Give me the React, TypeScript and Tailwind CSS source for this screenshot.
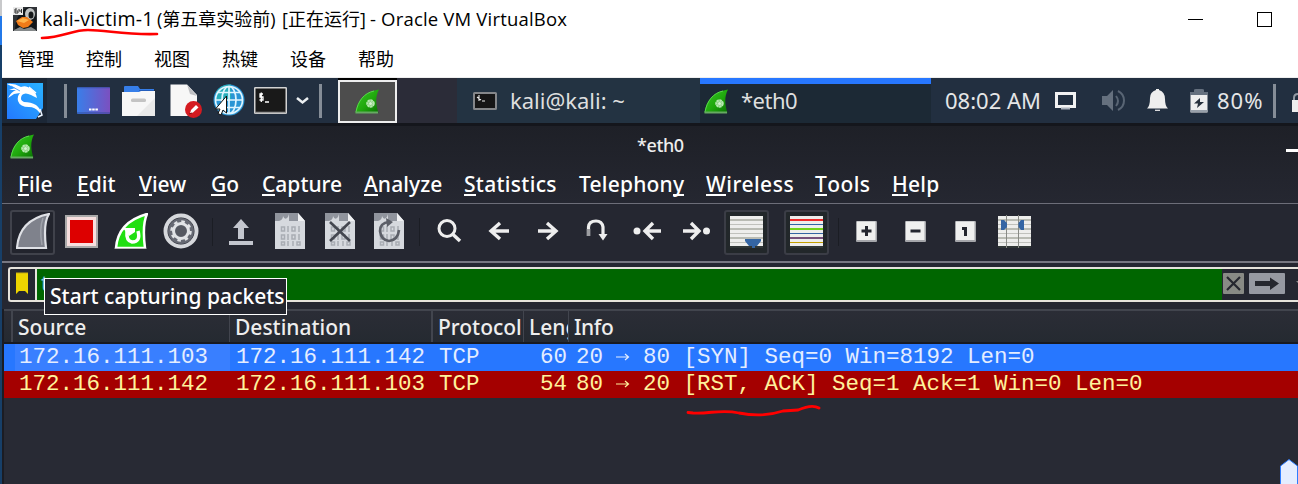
import React from "react";

type IconProps = { box: string; className?: string; children: React.ReactNode };

function Icon({ box, className = "", children }: IconProps) {
  const [, , w, h] = box.split(" ");
  return (
    <svg viewBox={box} width={w} height={h} className={"block shrink-0 " + className}>
      {children}
    </svg>
  );
}

function GreenFin({ className = "" }: { className?: string }) {
  return (
    <Icon box="0 0 25 25" className={className}>
      <defs>
        <linearGradient id="fin" x1="0" y1="0" x2="1" y2="1">
          <stop offset="0" stopColor="#3ac72b" />
          <stop offset=".55" stopColor="#1fa80c" />
          <stop offset="1" stopColor="#087003" />
        </linearGradient>
      </defs>
      <path d="M.5 24C2 12 9 3 24 .5C20 8 21 16 23.500 24Z" fill="url(#fin)" />
      <path d="M1 23C3 12 9 4 19 2" fill="none" stroke="#59d84c" strokeWidth="1" />
      <path d="M.5 22.500H23V24.500H.5Z" fill="#66aa62" />
      <circle cx="15.500" cy="14.500" r="3.200" fill="#7fca77" stroke="#b5e8ae" strokeWidth="2.200" strokeDasharray="2.400 .5" />
      <circle cx="15.500" cy="14.500" r="1.500" fill="#d5f2d0" />
    </Icon>
  );
}

function VmTitle() {
  return (
    <div className="flex h-10 items-start">
      <Icon box="13 7 24 24" className="ml-[11px] mt-[7px]">
        <rect x="13" y="7" width="24" height="24" fill="#303337" />
        <path d="M15 30C15 20 20 9 29 7C36 9 37 18 36 30Z" fill="#11161a" />
        <ellipse cx="30" cy="14" rx="5" ry="6" fill="#bfc2c2" />
        <ellipse cx="31" cy="15" rx="2.500" ry="3.500" fill="#16191b" />
        <path d="M16 21L22 17L27 17L33 22L28 27L23 28L18 25Z" fill="#f07b19" />
        <path d="M17 21L23 18L29 20L24 23Z" fill="#ffb44b" />
        <path d="M14 30L20 27L24 29L31 27L36 30V31H14Z" fill="#85898a" />
        <rect x="13" y="7" width="10" height="8" fill="#e9e9e9" />
        <path d="M17 9H15V13H18V11H15M19 9V11H22M21.500 9V13" fill="none" stroke="#333" strokeWidth="1" />
      </Icon>
      <div className="ml-[5px] mt-[7px] flex h-6 items-center whitespace-pre font-['Open_Sans','Noto_Sans_CJK_SC',sans-serif] text-[18px] leading-6 text-black">
        <span className="w-[115px] text-[19.500px] tracking-[0.230px]">kali-victim-1</span>
        <span className="w-[125px]">(第五章实验前)</span>
        <span className="w-[88px]">[正在运行]</span>
        <span className="text-[18.500px] tracking-[0.180px]">- Oracle VM VirtualBox</span>
      </div>
      <div className="ml-auto mt-[12px] flex h-[15px]">
        <div className="mr-[54px] mt-[7px] h-px w-[15px] bg-black" />
        <div className="mr-[26px] h-[15px] w-[15px] border border-black" />
      </div>
    </div>
  );
}

function VmMenu() {
  return (
    <div className="flex h-[38px] gap-8 border-b border-[#eeeeee] pl-4 pt-[6px] font-['Noto_Sans_CJK_SC',sans-serif] text-[18px] leading-[25px] text-black">
      {["管理", "控制", "视图", "热键", "设备", "帮助"].map((t) => (
        <span key={t} className="w-9 whitespace-nowrap">{t}</span>
      ))}
    </div>
  );
}

function Divider({ className }: { className: string }) {
  return <div className={"mt-[6px] h-[34px] w-[3px] shrink-0 bg-[#858d97] " + className} />;
}

function Panel() {
  return (
    <div className="flex h-[45px] items-start bg-[#222f40]">
      <div className="h-[45px] w-[45px] shrink-0 bg-[#1c2736] pl-[5px] pt-[5px]">
        <Icon box="7 83 36 36">
          <defs>
            <linearGradient id="dragon" x1="0" y1="1" x2="1" y2="0">
              <stop stopColor="#2379ff" />
              <stop offset="1" stopColor="#29b2ff" />
            </linearGradient>
          </defs>
          <rect x="7" y="83" width="36" height="36" fill="url(#dragon)" />
          <path d="M7 84Q14 83 21 87Q27 85 31 89Q36 92 37 98L31 95Q25 92 22 95Q19 100 24 102Q31 102 36 105Q41 109 42 115L39 112Q35 107 29 107Q20 107 18 101Q17 96 20 93L14 94L8 98Q11 92 16 90L9 90L15 88Z" fill="#fff" />
          <path d="M11 86L20 91M27 86L34 90" stroke="#2b92ff" strokeWidth=".8" />
          <path d="M29 87L36 93" stroke="#fff" strokeWidth="1.300" />
          <path d="M36 119L43 108V119Z" fill="#1c2736" />
          <path d="M40 109L42 115L38 117" stroke="#e9f3ff" fill="none" strokeWidth="1.500" />
        </Icon>
      </div>
      <Divider className="ml-[17px]" />
      <Icon box="77 87 33 27" className="ml-[10px] mt-[9px]">
        <defs>
          <linearGradient id="desk">
            <stop stopColor="#397ee9" />
            <stop offset="1" stopColor="#7b50c0" />
          </linearGradient>
        </defs>
        <rect x="77" y="87" width="33" height="27" rx="1" fill="url(#desk)" />
        <path d="M77 87.500H110M77 113H110" stroke="#304a98" opacity=".6" strokeWidth="1.500" />
        <path d="M89 109.500H98" stroke="#fff" strokeWidth="2.200" strokeDasharray="2.500 .7" />
      </Icon>
      <Icon box="122 86 33 30" className="ml-3 mt-2">
        <path d="M124 92V87Q124 86 125 86H138L140 89H154V95H124Z" fill="#367ee9" />
        <path d="M139 90.500H154" stroke="#245ebc" />
        <path d="M122 92H139L141 91H155V116H122Z" fill="#f7f7f7" />
        <path d="M155 98V116H137Z" fill="#e9e9e9" />
        <rect x="131" y="98.500" width="15" height="3.500" rx="1.500" fill="#c4c4c4" />
      </Icon>
      <Icon box="170 84 32 34" className="ml-[15px] mt-[6px]">
        <path d="M170.500 84.500H187L197 95V116H170.500Z" fill="#f7f7f7" />
        <path d="M187 84.500L197 96L190 94Z" fill="#bfc0c3" />
        <circle cx="193.500" cy="109.500" r="8.500" fill="#d51b21" />
        <path d="M190 113.500L191 110L196 105L198.500 107.500L193 112.500Z" fill="#fff" />
        <path d="M189 114L192 113" stroke="#8b1015" />
      </Icon>
      <Icon box="213 84 32 33" className="ml-[11px] mt-[6px]">
        <circle cx="229" cy="100" r="15.500" fill="#2995d5" />
        <path d="M216 92A15.500 15.500 0 0 1 231 84.500V100H216Z" fill="#28aebb" />
        <g fill="none" stroke="#dff5ff" strokeWidth="1.700">
          <circle cx="229" cy="100" r="13.500" />
          <ellipse cx="229" cy="100" rx="7" ry="13.500" />
          <path d="M229 86V114M215 100H243M218 92.500H240M218 107.500H240" />
        </g>
        <path d="M226.500 96V113L223 110L221 115L218 113.500L220 109H215.500Z" fill="#fff" stroke="#111" strokeWidth="1" />
      </Icon>
      <Icon box="254 87 33 27" className="ml-[9px] mt-[9px]">
        <rect x="254.750" y="87.750" width="31.500" height="25.500" rx=".5" fill="#191919" stroke="#d3d3d3" strokeWidth="1.500" />
        <path d="M255 112.500H286" stroke="#999" strokeWidth="1.500" />
        <path d="M263 94H260V97H263V100H259.500M261.300 92.500V102M265 102H269" fill="none" stroke="#fff" strokeWidth="1.300" />
      </Icon>
      <Icon box="296 96 13 9" className="ml-[9px] mt-[18px]">
        <path d="M297 98L302.500 102.500L308 98" fill="none" stroke="#edf0f2" strokeWidth="2.500" />
      </Icon>
      <Divider className="ml-[10px]" />
      <div className="ml-4 h-[45px] w-[59px] shrink-0 border-t-2 border-black bg-[#2b2c38]">
        <div className="h-[43px] border-2 border-[#eeeeee] bg-[#4d4d4d] pl-[15px] pt-[7px]"><GreenFin /></div>
      </div>
      <div className="h-[45px] w-[60px] shrink-0 bg-[#2b2c38]" />
      <div className="flex h-[45px] w-[243px] shrink-0 items-start bg-[#233342]">
        <Icon box="473 92 24 18" className="ml-4 mt-[14px]">
          <rect x="474" y="93" width="22" height="16" rx=".5" fill="#161616" stroke="#85878a" strokeWidth="2" />
          <path d="M479 95V101M477 97L481 100M482 101H485" stroke="#eee" strokeWidth="1.100" />
        </Icon>
        <span className="ml-[13px] mt-[8px] whitespace-pre font-['Noto_Sans'] text-[22px] leading-7 text-[#dedfdf]">kali@kali: ~</span>
      </div>
      <div className="flex h-[45px] w-[231px] shrink-0 border-t-[6px] border-[#2777ff] bg-[#1c2935]">
        <GreenFin className="ml-1 mt-[5px]" />
        <span className="ml-[12px] mt-[2px] font-['Noto_Sans'] text-[22px] leading-7 tracking-[-0.500px] text-[#dedfdf]">*eth0</span>
      </div>
      <span className="ml-[14px] mt-[8px] w-[110px] shrink-0 whitespace-nowrap font-['Noto_Sans'] text-[22px] leading-7 text-[#e5e6e7]">08:02 AM</span>
      <Icon box="1055 91 21 19" className="mt-[13px]">
        <path d="M1056.500 93.500H1074.500V106.500H1056.500Z" fill="none" stroke="#f2f2f2" strokeWidth="3" />
        <path d="M1061 108.500H1070" stroke="#aab1ba" strokeWidth="2" />
      </Icon>
      <Icon box="1101 89 24 23" className="ml-[25px] mt-[11px]">
        <path d="M1102 96H1107L1113 90V111L1107 105H1102Z" fill="#65707e" />
        <path d="M1116 96Q1120 101 1116 106M1118 91C1126 95 1126 106 1118 110" fill="none" stroke="#596574" strokeWidth="2" />
      </Icon>
      <Icon box="1147 89 21 23" className="ml-[22px] mt-[11px]">
        <path d="M1147 108.500Q1150 106 1150 98Q1150 92 1156 90V89H1159V90Q1165 92 1165 99Q1165 106 1168 108.500Z" fill="#eee" />
        <path d="M1155 110.300H1160" stroke="#eee" strokeWidth="1.200" />
      </Icon>
      <Icon box="1190 89 18 24" className="ml-[22px] mt-[11px]">
        <path d="M1190 95V92H1194V90Q1194 89 1196 89H1202Q1204 89 1204 90V92H1208V95Z" fill="#65707e" />
        <path d="M1190.500 95H1207.500V112.500H1190.500Z" fill="#eee" />
        <path d="M1190.500 111H1207.500" stroke="#98a0aa" strokeWidth="2" />
        <path d="M1200 98L1194 103.500H1198L1197 108L1204 102H1200Z" fill="#27303c" />
      </Icon>
      <span className="ml-[9px] mt-[8px] w-[56px] shrink-0 font-['Noto_Sans'] text-[22px] leading-7 tracking-[1px] text-[#e5e6e7]">80%</span>
      <Divider className="" />
      <Icon box="1291 91 7 21" className="ml-[15px] mt-[13px]">
        <path d="M1294 101V98Q1294 94 1298 94" fill="none" stroke="#9299a3" strokeWidth="2" />
        <path d="M1292 100H1298V112H1292Z" fill="#eee" />
      </Icon>
    </div>
  );
}

const menuItems: [string, string, string, string][] = [
  ["", "F", "ile", "w-[59px]"],
  ["", "E", "dit", "w-[62px]"],
  ["", "V", "iew", "w-[72px]"],
  ["", "G", "o", "w-[51px]"],
  ["", "C", "apture", "w-[102px]"],
  ["", "A", "nalyze", "w-[100px] tracking-[0.100px]"],
  ["", "S", "tatistics", "w-[115px] tracking-[0.300px]"],
  ["Telephon", "y", "", "w-[127px] tracking-[0.200px]"],
  ["", "W", "ireless", "w-[109px] tracking-[0.500px]"],
  ["", "T", "ools", "w-[77px] tracking-[0.400px]"],
  ["", "H", "elp", "w-[60px] tracking-[0.300px]"],
];

function AppHeader() {
  return (
    <div className="flex h-[81px] flex-col border-t-[3px] border-[#14161c] border-b border-b-[#6d6e79] bg-linear-to-b from-[#1e2027] to-[#252731]">
      <div className="flex h-[40px] items-start">
        <GreenFin className="ml-2 mt-2" />
        <span className="ml-[602px] mt-[7px] font-['Noto_Sans'] text-[18px] font-medium leading-6 tracking-[-0.400px] text-[#eeeeee]">*eth0</span>
        <div className="ml-auto mt-[23px] h-[3px] w-3 bg-white" />
      </div>
      <div className="flex pl-4 font-['Noto_Sans'] text-[21px] font-medium leading-[36px] text-white">
        {menuItems.map(([a, u, b, w]) => (
          <div key={a + u + b} className={"flex h-[36px] shrink-0 whitespace-nowrap " + w}>
            <span>{a}</span>
            <span className="h-[30px] border-b-2 border-white leading-[36px]">{u}</span>
            <span>{b}</span>
          </div>
        ))}
      </div>
    </div>
  );
}

function BitsDoc({ children, className }: { children?: React.ReactNode; className: string }) {
  return (
    <Icon box="0 0 30 36" className={className}>
      <path d="M0 0H23L30 8V36H0Z" fill="#d6d9de" />
      <path d="M0 0H23L26 8H0Z" fill="#90949d" />
      <path d="M4 8Q8 7 8 3Q10 8 13 4L14 1V8Z" fill="#d6d9de" />
      <path d="M23 0L30 8H23Z" fill="#f0f1f3" />
      <g fill="none" stroke="#a9adb4" strokeWidth="1.500">
        <path d="M6.500 14H9.500V18H6.500ZM13 13V19M17 14H20V18H17ZM24 13V19M6.500 22H9.500V26H6.500ZM13 21V27M17 22H20V26H17ZM24 21V27M6.500 29H9.500V32H6.500ZM13 28V33M18 28V33M22 29H25V32H22Z" />
      </g>
      {children}
    </Icon>
  );
}

function SquareKey({ className, d }: { className: string; d: string }) {
  return (
    <Icon box="0 0 21 21" className={className}>
      <rect width="21" height="21" rx="1" fill="#a5a6aa" />
      <rect x="1" y="0.500" width="18.500" height="18.500" fill="#f0f0ef" />
      <path d={d} fill="none" stroke="#24262f" strokeWidth="3" />
    </Icon>
  );
}

function Sep({ className }: { className: string }) {
  return <div className={"mt-[14px] h-7 w-px shrink-0 bg-[#1b1d24] " + className} />;
}

function Toolbar() {
  return (
    <div className="flex h-[59px] items-start border-b-2 border-[#777781] bg-[#252731]">
      <div className="ml-2 mt-[6px] h-[45px] w-[45px] shrink-0 rounded-[3px] border-2 border-[#40424b] bg-[#22242d] pl-1 pt-[1px]">
        <Icon box="16 213 34 36">
          <path d="M17 248Q19 220 49 214Q43 223 46 248Z" fill="#7f828c" stroke="#dfe1e6" strokeWidth="2.200" />
          <path d="M43 218Q39 229 42 245" fill="none" stroke="#9fa2aa" strokeWidth="1.500" />
        </Icon>
      </div>
      <div className="ml-[10px] mt-[11px] h-[33px] w-[33px] shrink-0 border-2 border-[#aaa] bg-[#dd0000] shadow-[inset_0_0_0_3px_#f7dede]" />
      <Icon box="114 213 34 36" className="ml-4 mt-[9px]">
        <path d="M116 248Q118 222 147 214Q142 225 145 248Z" fill="#20df12" stroke="#fff" strokeWidth="2.500" />
        <path d="M115 248.500H146" stroke="#b9b9b9" />
        <path d="M138 231Q141 242 132 242Q126 241 127 231" fill="none" stroke="#fff" strokeWidth="3.500" />
        <path d="M123 228H135V232L129 236Z" fill="#fff" />
      </Icon>
      <Icon box="163 213 36 36" className="ml-[15px] mt-[9px]">
        <circle cx="181" cy="231" r="15.500" fill="none" stroke="#d6d8dc" strokeWidth="4" />
        <circle cx="181" cy="231" r="13" fill="#666973" />
        <circle cx="181" cy="231" r="7.500" fill="none" stroke="#e1e3e6" strokeWidth="3" />
        <circle cx="181" cy="231" r="9.500" fill="none" stroke="#e1e3e6" strokeWidth="2.500" strokeDasharray="3.500 3.961" />
        <circle cx="181" cy="231" r="5.500" fill="#555861" />
      </Icon>
      <Sep className="ml-[13px]" />
      <Icon box="229 218 24 28" className="ml-4 mt-[14px]">
        <path d="M229 241H253V245H229Z" fill="#c3c6ce" />
        <path d="M238 239V228H233L241 219L249 228H244V239Z" fill="#c3c6ce" />
      </Icon>
      <BitsDoc className="ml-[22px] mt-[9px]" />
      <BitsDoc className="ml-5 mt-[9px]">
        <path d="M5 9L25 28M25 9L5 28" stroke="#444750" strokeWidth="2.600" />
      </BitsDoc>
      <BitsDoc className="ml-[19px] mt-[9px]">
        <path d="M15 9Q6 10 6 18Q7 27 15 28Q24 27 25 17" fill="none" stroke="#5c5f68" strokeWidth="2.600" />
        <path d="M12 5L19 9L13 14Z" fill="#5c5f68" />
      </BitsDoc>
      <Sep className="ml-[15px]" />
      <Icon box="437 218 25 26" className="ml-[17px] mt-[14px]">
        <circle cx="447" cy="228.500" r="8" fill="none" stroke="#eee" strokeWidth="3" />
        <path d="M452.500 234L460 241" stroke="#eee" strokeWidth="3.500" />
      </Icon>
      <Icon box="488 221 22 20" className="ml-[26px] mt-[17px]">
        <path d="M509 231H491M500 223L491 231L500 239" fill="none" stroke="#eee" strokeWidth="3.400" />
      </Icon>
      <Icon box="537 221 22 20" className="ml-[27px] mt-[17px]">
        <path d="M538 231H556M547 223L556 231L547 239" fill="none" stroke="#eee" strokeWidth="3.400" />
      </Icon>
      <Icon box="586 219 23 23" className="ml-[27px] mt-[15px]">
        <path d="M588.500 236V227Q589 221 596 221Q602 221 603 227V235" fill="none" stroke="#eee" strokeWidth="3.200" />
        <path d="M598.500 234H607.500L603 240.500Z" fill="#eee" />
        <path d="M588.500 229V236" stroke="#9c9da1" strokeWidth="3.500" />
      </Icon>
      <Icon box="633 221 29 20" className="ml-[24px] mt-[17px]">
        <circle cx="637" cy="231" r="3.500" fill="#eee" />
        <path d="M661 231H645M653 223L645 231L653 239" fill="none" stroke="#eee" strokeWidth="3.400" />
      </Icon>
      <Icon box="682 221 29 20" className="ml-5 mt-[17px]">
        <circle cx="706.500" cy="231" r="3.500" fill="#eee" />
        <path d="M683 231H699M691 223L699 231L691 239" fill="none" stroke="#eee" strokeWidth="3.400" />
      </Icon>
      <div className="ml-[13px] mt-[6px] h-[45px] w-[45px] shrink-0 rounded-[3px] border-2 border-[#3b3d46] bg-[#22272a] pl-1 pt-1">
        <Icon box="0 0 33 34">
          <path d="M0 0H33V30H0Z" fill="#eeeeec" />
          <path d="M0 4H33M0 13H33M0 22H33" stroke="#b9bbb3" strokeWidth="2" />
          <path d="M0 8.500H33M0 17.500H33M0 26.500H33" stroke="#c0c1bc" />
          <path d="M0 30H33V32H0Z" fill="#303636" />
          <path d="M15 25V23H31V25L27 30H25V32H22V30H19Z" fill="#3465a4" />
        </Icon>
      </div>
      <div className="ml-[15px] mt-[6px] h-[45px] w-[45px] shrink-0 rounded-[3px] border-2 border-[#3b3d46] bg-[#22272a] pl-1 pt-1">
        <Icon box="0 0 33 32">
          <path d="M0 0H33V30H0Z" fill="#eeeeec" />
          <path d="M0 4H33" stroke="#ef2929" strokeWidth="2" />
          <path d="M0 8.500H33M0 17.500H33" stroke="#3465a4" />
          <path d="M0 13H33" stroke="#73d216" strokeWidth="2" />
          <path d="M0 22H33" stroke="#75507b" strokeWidth="2" />
          <path d="M0 26.500H33" stroke="#c4a000" />
          <path d="M0 31H33" stroke="#303636" strokeWidth="2" />
        </Icon>
      </div>
      <Sep className="ml-[9px]" />
      <SquareKey className="ml-[17px] mt-[17px]" d="M5.500 10H15.500M10.500 5V15" />
      <SquareKey className="ml-7 mt-[17px]" d="M5.500 10H15.500" />
      <SquareKey className="ml-[29px] mt-[17px]" d="M7 7.500H10.500V15" />
      <Icon box="0 0 33 33" className="ml-[22px] mt-[11px]">
        <path d="M0 1H33V31H0Z" fill="#eeeeec" />
        <path d="M0 5H33M0 14H33M0 23H33" stroke="#b9bbb3" strokeWidth="2" />
        <path d="M0 9.500H33M0 18.500H33M0 27.500H33" stroke="#c0c1bc" />
        <path d="M0 31H33V33H0Z" fill="#303636" />
        <path d="M8.500 0V33M20.500 0V33" stroke="#888a85" />
        <path d="M3 5H6L9 8V12L6 15H3ZM26 5H23L20.500 8V12L23 15H26Z" fill="#3465a4" />
      </Icon>
    </div>
  );
}

function FilterBar() {
  return (
    <div className="flex h-[46px] bg-[#252731] pl-[6px] pt-1">
      <div className="flex h-[35px] w-full overflow-hidden rounded-l-[3px] border-y-2 border-l-2 border-[#e6e3dc]">
        <Icon box="10 269 25 31">
          <path d="M16 273H28V294L25 291H19L16 294Z" fill="#edd400" />
          <path d="M16 273H28" stroke="#c7ae12" />
        </Icon>
        <div className="h-[31px] w-[1187px] shrink-0 overflow-hidden border-l-2 border-[#e6e3dc] bg-[#006600] pl-1 font-['Noto_Sans'] text-[21px] leading-[29px] text-[#8ac0e0]">t</div>
        <Icon box="1223 273 21 21" className="ml-px mt-1">
          <rect x="1223" y="273" width="21" height="21" rx="1" fill="#888a85" />
          <path d="M1227 277L1240 290M1240 277L1227 290" stroke="#25272f" strokeWidth="2.200" />
        </Icon>
        <Icon box="1249 273 36 21" className="ml-[5px] mt-1">
          <rect x="1249" y="273" width="36" height="21" rx="1" fill="#9699a2" />
          <path d="M1255 281H1270V277.500L1279 283.500L1270 290V286H1255Z" fill="#25272f" />
        </Icon>
        <Icon box="1295 281 3 3" className="ml-[10px] mt-3">
          <path d="M1296 281H1298V283Z" fill="#888" />
        </Icon>
      </div>
    </div>
  );
}

const packets = [
  ["172.16.111.103", "172.16.111.142", "TCP", "60", "20 → 80 [SYN] Seq=0 Win=8192 Len=0"],
  ["172.16.111.142", "172.16.111.103", "TCP", "54", "80 → 20 [RST, ACK] Seq=1 Ack=1 Win=0 Len=0"],
];

function Info({ text }: { text: string }) {
  const [from, rest] = text.split(" → ");
  return (
    <span className="flex whitespace-pre pl-[9px]">
      <span className="w-[40px]">{from}</span>
      <svg viewBox="0 0 14 8" width="14" height="8" className="mr-[13px] mt-[9px]">
        <path d="M0 4H12M9 1L12.500 4L9 7" stroke="currentColor" fill="none" strokeWidth="1.200" />
      </svg>
      <span>{rest}</span>
    </span>
  );
}

function PacketList() {
  return (
    <div className="ml-[2px] flex-1 bg-[#282a34]">
      <div className="flex h-[35px] border-b-2 border-t-2 border-b-[#181a21] border-t-[#42454e] bg-linear-to-b from-[#2b2d36] to-[#252a31] font-['Noto_Sans'] text-[21px] font-medium leading-[32px] text-[#eeeeee]">
        <div className="w-[9px] border-r-2 border-[#42454e]" />
        <div className="w-[217px] border-r border-[#42454e] pl-[5px]">Source</div>
        <div className="w-[203px] border-r-2 border-[#42454e] pl-[5px]">Destination</div>
        <div className="w-[91px] overflow-hidden border-r border-[#42454e] pl-[5px]">Protocol</div>
        <div className="w-[45px] overflow-hidden border-r border-[#42454e] pl-[5px]">Length</div>
        <div className="pl-[5px] tracking-[-0.400px]">Info</div>
      </div>
      {packets.map((p, i) => (
        <div
          key={p[0]}
          className={
            "flex h-[27px] font-['Liberation_Mono'] text-[22.500px] leading-[27px] " +
            (i === 0 ? "bg-[#2777ff] text-[#e4edff]" : "bg-[#a40000] text-[#fff29c]")
          }
        >
          <span className={"ml-[11px] w-[215px] pl-[4px] " + (i === 0 ? "bg-[#397fff]" : "")}>{p[0]}</span>
          <span className="w-[206px] pl-[6px]">{p[1]}</span>
          <span className="w-[80px] pl-[3px]">{p[2]}</span>
          <span className="w-[51px] text-right">{p[3]}</span>
          <Info text={p[4]} />
        </div>
      ))}
    </div>
  );
}

export default function App() {
  return (
    <div className="relative flex h-[484px] w-[1298px] overflow-hidden bg-white">
      <div className="h-full w-[2px] shrink-0 bg-[#173f68]">
        <div className="h-4 bg-[#c8c9cb]" />
        <div className="h-[29px] bg-[#2379e9]" />
      </div>
      <div className="flex h-full w-[1296px] flex-col">
        <VmTitle />
        <VmMenu />
        <Panel />
        <div className="flex flex-1 flex-col bg-[#1b1c23]">
          <AppHeader />
          <Toolbar />
          <FilterBar />
          <PacketList />
        </div>
      </div>
      <div className="absolute left-[44px] top-[278px] h-[37px] w-[243px] whitespace-nowrap border border-white bg-[#23252e] pl-[5px] font-['Noto_Sans'] text-[21px] font-medium leading-[35px] tracking-[0.020px] text-white">
        Start capturing packets
      </div>
      <svg viewBox="0 0 1298 484" className="pointer-events-none absolute inset-0 h-[484px] w-[1298px]">
        <path d="M42 38C64 37 72 30 88 30C107 30 124 35 157 34" fill="none" stroke="#f00" strokeWidth="2.600" strokeLinecap="round" />
        <path d="M688 412.500L693 413C710 414 721 409 739 413C755 416 771 415 783 411L798 410C807 406 814 405 819 408" fill="none" stroke="#f00" strokeWidth="2.800" strokeLinecap="round" />
        <path d="M1280.500 485V466L1289 459.500L1297.500 466V485Z" fill="#e4edff" stroke="#2d7cff" />
      </svg>
    </div>
  );
}
